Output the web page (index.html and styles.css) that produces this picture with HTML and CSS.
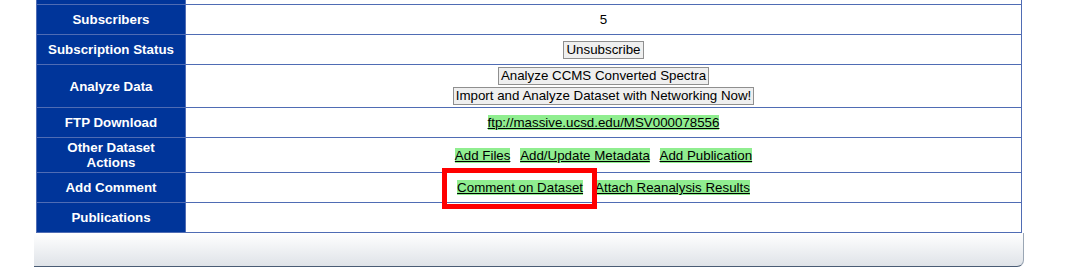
FILE: index.html
```
<!DOCTYPE html>
<html>
<head>
	<meta charset="UTF-8">
	<title>Dataset MSV000078556</title>
<link rel="stylesheet" href="styles.css">
</head>
<body>
<div class="panel">
	<table class="details">
		<tr class="cut"><th></th><td></td></tr>
		<tr><th>Subscribers</th><td>5</td></tr>
		<tr><th>Subscription Status</th><td><button class="btn">Unsubscribe</button></td></tr>
		<tr>
			<th>Analyze Data</th>
			<td class="stack">
				<button class="btn">Analyze CCMS Converted Spectra</button>
				<button class="btn">Import and Analyze Dataset with Networking Now!</button>
			</td>
		</tr>
		<tr><th>FTP Download</th><td><a class="hl" href="#">ftp://massive.ucsd.edu/MSV000078556</a></td></tr>
		<tr>
			<th>Other Dataset Actions</th>
			<td><a class="hl act" href="#">Add Files</a> <a class="hl act" href="#">Add/Update Metadata</a> <a class="hl act" href="#">Add Publication</a></td>
		</tr>
		<tr>
			<th>Add Comment</th>
			<td><span class="mark"><a class="hl" href="#">Comment on Dataset</a><span class="ring"></span></span><a class="hl next" href="#">Attach Reanalysis Results</a></td>
		</tr>
		<tr><th>Publications</th><td></td></tr>
	</table>
	<div class="foot"></div>
</div>
</body>
</html>
```
FILE: styles.css
```
html{font:13.33px "Liberation Sans",Arial,sans-serif;}
body{margin:0;background:#fff;}
.panel{margin-left:34px;width:990px;}
.details{width:986px;margin:0 auto;border-collapse:collapse;}
.details th,.details td{border:1px solid #4f6cb4;height:25px;padding:2px 5px;line-height:15px;text-align:center;vertical-align:middle;}
.details th{width:138px;background:#00359a;color:#fff;font-weight:bold;}
.details td{color:#000;}
.details tr.cut th,.details tr.cut td{height:4px;padding:0;border-top:none;}
.stack .btn{display:block;margin:0 auto;}
.stack .btn+.btn{margin-top:2px;}
.btn{font:13.33px/14px "Liberation Sans",Arial,sans-serif;color:#000;background:#efefef;border:1px solid #8f8f8f;border-radius:0;padding:1px 2px;margin:0;}
a.hl{color:#000;background:#90ee90;text-decoration:underline;}
a.act{margin:0 3px;}
a.next{margin-left:12px;}
.mark{position:relative;}
.ring{position:absolute;left:-15px;top:-12px;width:145px;height:31px;border:5px solid #f00;}
.foot{height:33px;background:linear-gradient(#fff,#dfe3e8);border-bottom:1px solid #4a5c74;border-right:1px solid #9aa6b4;border-bottom-right-radius:7px;}
```
